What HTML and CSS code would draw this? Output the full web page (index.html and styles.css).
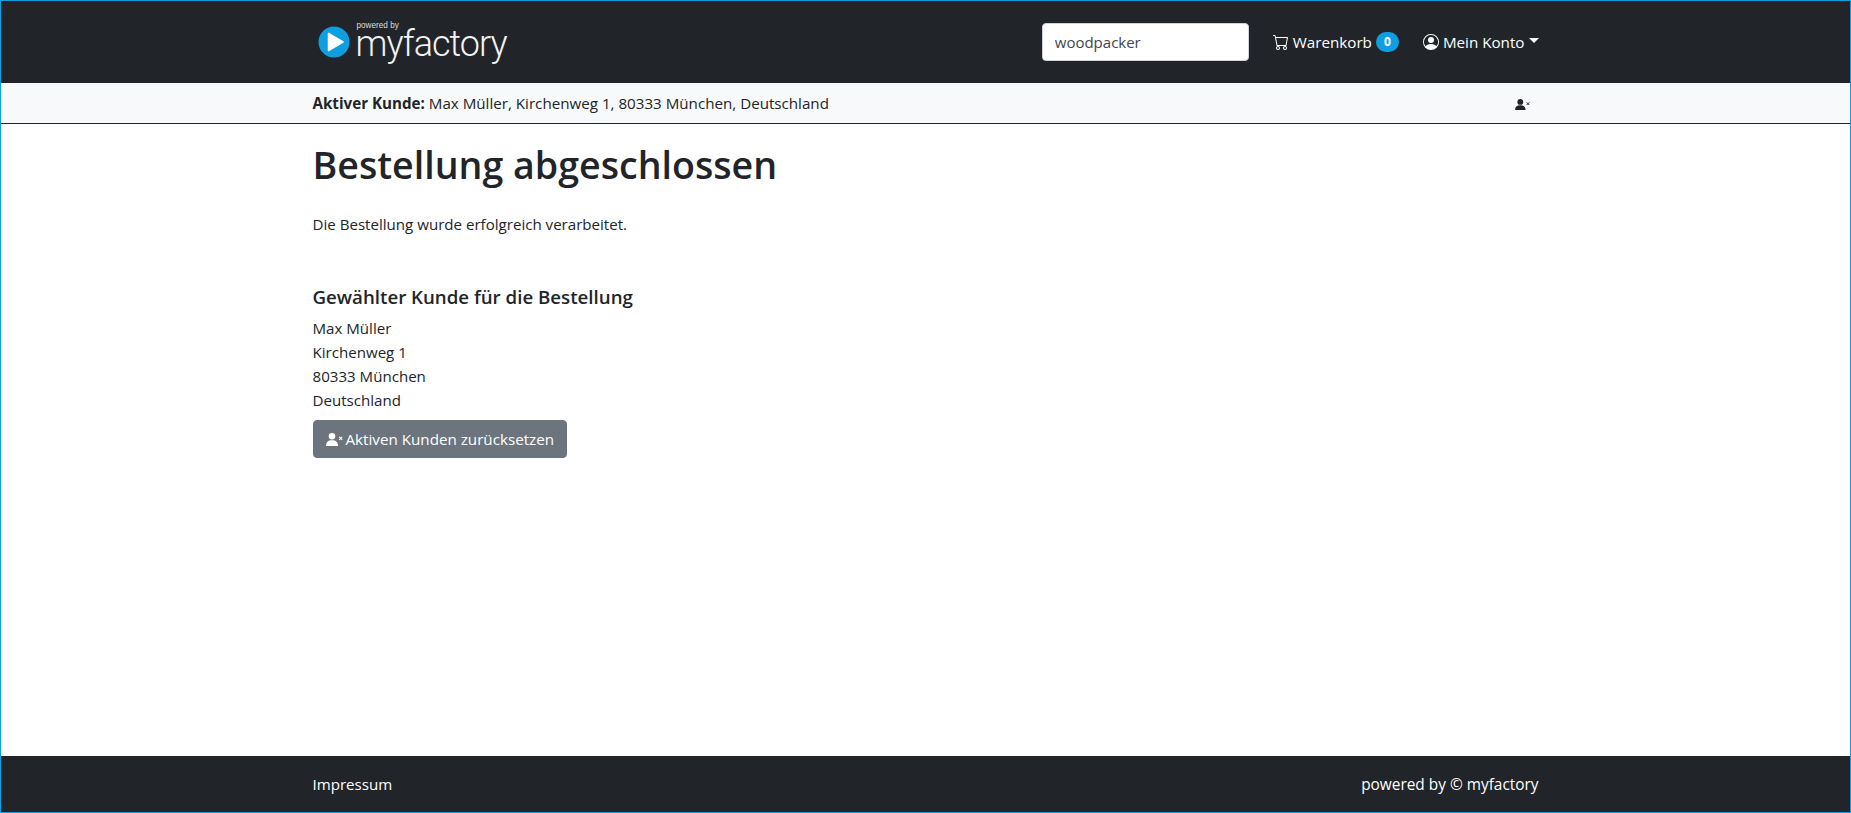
FILE: index.html
```html
<!DOCTYPE html>
<html lang="de">
<head>
  <meta charset="UTF-8">
  <title>Bestellung abgeschlossen</title>
  <link rel="stylesheet" href="styles.css">
</head>
<body>

<div class="page">
  <!-- Header -->
  <header class="topbar">
    <div class="container topbar-inner">
      <a class="logo" href="#">
        <svg class="logo-icon" viewBox="0 0 32 32" width="32" height="32">
          <circle cx="16" cy="16" r="15.5" fill="#0f9fe0"/>
          <path d="M10.5 7.5 L25 16 L10.5 24.5 Z" fill="#fff" stroke="#fff" stroke-width="1.5" stroke-linejoin="round"/>
        </svg>
        <span class="logo-text">
          <span class="logo-small">powered by</span>
          <span class="logo-name">myfactory</span>
        </span>
      </a>
      <div class="topbar-right">
        <input class="search" type="text" value="woodpacker">
        <a class="nav-link" href="#">
          <svg class="icon" viewBox="0 0 16 16" width="16" height="16" fill="currentColor">
            <path d="M0 1.5A.5.5 0 0 1 .5 1H2a.5.5 0 0 1 .485.379L2.89 3H14.5a.5.5 0 0 1 .491.592l-1.5 8A.5.5 0 0 1 13 12H4a.5.5 0 0 1-.491-.408L2.01 3.607 1.61 2H.5a.5.5 0 0 1-.5-.5zM3.102 4l1.313 7h8.17l1.313-7H3.102zM5 12a2 2 0 1 0 0 4 2 2 0 0 0 0-4zm7 0a2 2 0 1 0 0 4 2 2 0 0 0 0-4zm-7 1a1 1 0 1 1 0 2 1 1 0 0 1 0-2zm7 0a1 1 0 1 1 0 2 1 1 0 0 1 0-2z"/>
          </svg>
          Warenkorb <span class="badge">0</span>
        </a>
        <a class="nav-link account" href="#">
          <svg class="icon" viewBox="0 0 16 16" width="16" height="16" fill="currentColor">
            <path d="M11 6a3 3 0 1 1-6 0 3 3 0 0 1 6 0z"/>
            <path fill-rule="evenodd" d="M0 8a8 8 0 1 1 16 0A8 8 0 0 1 0 8zm8-7a7 7 0 0 0-5.468 11.37C3.242 11.226 4.805 10 8 10s4.757 1.225 5.468 2.37A7 7 0 0 0 8 1z"/>
          </svg>
          Mein Konto<span class="caret"></span>
        </a>
      </div>
    </div>
  </header>

  <!-- Active customer -->
  <div class="customer-bar">
    <div class="container customer-inner">
      <div><strong>Aktiver Kunde:</strong> Max Müller, Kirchenweg 1, 80333 München, Deutschland</div>
      <svg class="icon-small" viewBox="0 0 17 13" width="15" height="11.5">
        <circle cx="6" cy="3.3" r="3.3" fill="currentColor"/>
        <path d="M0 13c0-4 2-5.8 6-5.8s6 1.8 6 5.8z" fill="currentColor"/>
        <path d="M13.2 3.8l3 3m0-3l-3 3" stroke="currentColor" stroke-width="1.1" fill="none"/>
      </svg>
    </div>
  </div>

  <!-- Content -->
  <main class="container content">
    <h1>Bestellung abgeschlossen</h1>
    <p class="intro">Die Bestellung wurde erfolgreich verarbeitet.</p>
    <h2>Gewählter Kunde für die Bestellung</h2>
    <address>
      Max Müller<br>
      Kirchenweg 1<br>
      80333 München<br>
      Deutschland
    </address>
    <button class="btn">
      <svg class="btn-icon" viewBox="0 0 17 13" width="17" height="13">
        <circle cx="6" cy="3.3" r="3.3" fill="currentColor"/>
        <path d="M0 13c0-4 2-5.8 6-5.8s6 1.8 6 5.8z" fill="currentColor"/>
        <path d="M13.2 3.8l3 3m0-3l-3 3" stroke="currentColor" stroke-width="1.1" fill="none"/>
      </svg>
      Aktiven Kunden zurücksetzen
    </button>
  </main>

  <!-- Footer -->
  <footer class="footer">
    <div class="container footer-inner">
      <a href="#">Impressum</a>
      <span class="footer-right">powered by © myfactory</span>
    </div>
  </footer>
</div>

</body>
</html>
```

FILE: styles.css
```css
* {
  box-sizing: border-box;
}

html, body {
  height: 100%;
}

body {
  margin: 0;
  font-family: "Open Sans", "Noto Sans", sans-serif;
  font-size: 15.1px;
  line-height: 24px;
  color: #212529;
  background-color: #fff;
}

a {
  color: inherit;
  text-decoration: none;
}

.page {
  height: 100%;
  display: flex;
  flex-direction: column;
  border: 1px solid #0f9fe0;
}

.container {
  width: 1256px;
  margin: 0 auto;
  padding: 0 15px;
}

/* Header */
.topbar {
  background-color: #212529;
  height: 82px;
  color: #fff;
}

.topbar-inner {
  height: 100%;
  display: flex;
  justify-content: space-between;
  align-items: center;
}

.logo {
  display: flex;
  align-items: center;
  gap: 6px;
  margin-left: 5px;
}

.logo-text {
  position: relative;
  display: block;
  margin-top: 4px;
}

.logo-small {
  position: absolute;
  top: -5px;
  left: 1px;
  font-family: "Liberation Sans", sans-serif;
  font-size: 8.2px;
  line-height: 9px;
  color: #ddd;
}

.logo-name {
  display: block;
  font-family: "Roboto", "Liberation Sans", sans-serif;
  font-size: 36px;
  line-height: 36px;
  font-weight: 300;
  letter-spacing: -1px;
  color: #f2f2f2;
}

.topbar-right {
  display: flex;
  align-items: center;
  font-size: 15.2px;
}

.search {
  width: 207px;
  height: 38px;
  padding: 0 12px;
  border: 1px solid #ced4da;
  border-radius: 4px;
  font-family: inherit;
  font-size: 15px;
  color: #3f464d;
  background: #fff;
}

.nav-link {
  display: flex;
  align-items: center;
  gap: 4px;
  color: #fff;
}

.nav-link:first-of-type {
  margin-left: 24px;
}

.account {
  margin-left: 24px;
}

.badge {
  display: inline-block;
  min-width: 23px;
  height: 20px;
  line-height: 20px;
  border-radius: 10px;
  background-color: #0f9fe0;
  font-size: 12px;
  font-weight: 700;
  text-align: center;
}

.caret {
  width: 0;
  height: 0;
  margin-bottom: 3px;
  border-top: 5px solid #fff;
  border-left: 5px solid transparent;
  border-right: 5px solid transparent;
}

/* Active customer bar */
.customer-bar {
  background-color: #f8f9fa;
  border-bottom: 1px solid #212529;
  height: 41px;
  font-size: 15.17px;
}

.customer-inner {
  height: 100%;
  display: flex;
  justify-content: space-between;
  align-items: center;
}

.icon-small {
  margin-right: 9px;
  margin-top: 3px;
}

/* Content */
.content {
  flex: 1;
  width: 1256px;
}

h1 {
  margin: 18px 0 0;
  font-size: 37.6px;
  line-height: 46px;
  font-weight: 600;
}

.intro {
  margin: 24px 0 0;
}

h2 {
  margin: 49px 0 0;
  font-size: 18.7px;
  line-height: 24px;
  font-weight: 600;
}

address {
  margin-top: 7px;
  font-style: normal;
}

.btn {
  display: flex;
  align-items: center;
  gap: 3px;
  height: 38px;
  margin-top: 8px;
  padding: 0 12px;
  border: 1px solid #6c757d;
  border-radius: 4px;
  background-color: #6c757d;
  color: #fff;
  font-family: inherit;
  font-size: 15.2px;
}

/* Footer */
.footer {
  background-color: #212529;
  color: #fff;
  height: 56px;
}

.footer-inner {
  height: 100%;
  display: flex;
  justify-content: space-between;
  align-items: center;
}

.footer-right {
  padding-top: 2px;
  font-size: 15.4px;
}
```
